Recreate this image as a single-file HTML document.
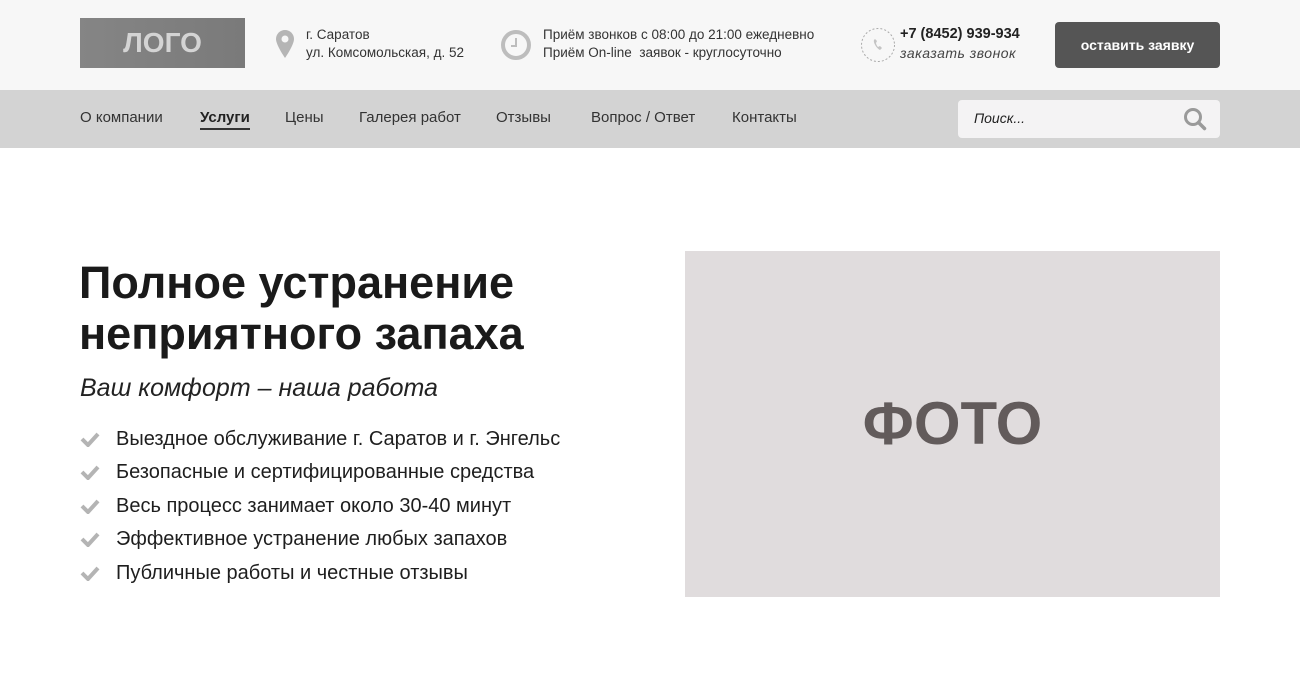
<!DOCTYPE html>
<html><head><meta charset="utf-8"><style>
*{margin:0;padding:0;box-sizing:border-box}
body{width:1300px;height:700px;background:#fff;font-family:"Liberation Sans",sans-serif;color:#222;position:relative;overflow:hidden}
.top{position:absolute;left:0;top:0;width:1300px;height:90px;background:#f7f7f7}
.nav{position:absolute;left:0;top:90px;width:1300px;height:58px;background:#d3d3d3}
.abs{position:absolute}
.logo{left:80px;top:18px;width:165px;height:50px;background:linear-gradient(90deg,#858585,#7a7a7a);color:#d4d4d4;font-weight:bold;font-size:28px;text-align:center;line-height:50px}
.sm{font-size:13.5px;line-height:18px;color:#333}
.nav a{position:absolute;top:19px;font-size:15px;color:#333;text-decoration:none}
.btn{left:1055px;top:22px;width:165px;height:46px;background:#555;border-radius:4px;color:#fff;font-weight:bold;font-size:14px;text-align:center;line-height:46px}
.search{left:958px;top:100px;width:262px;height:38px;background:#f4f3f4;border-radius:4px;font-style:italic;font-size:14px;line-height:36px;padding-left:16px;color:#222}
h1{position:absolute;left:79px;top:257px;font-size:45px;line-height:51px;font-weight:bold;color:#1a1a1a}
.sub{left:80px;top:374px;font-size:25px;font-style:italic;color:#222}
ul{position:absolute;left:80px;top:426px;list-style:none}
li{font-size:20px;height:33.4px;line-height:26px;padding-left:36px;position:relative;color:#1e1e1e}
li svg{position:absolute;left:0;top:5px}
.photo{left:685px;top:251px;width:535px;height:346px;background:#e0dcdd;color:#625b5b;font-weight:bold;font-size:60px;text-align:center;line-height:346px}
</style></head><body>
<div class="top"></div>
<div class="nav">
<a style="left:80px">О компании</a>
<a style="left:200px;font-weight:bold;color:#222;border-bottom:2px solid #333;padding-bottom:2px">Услуги</a>
<a style="left:285px">Цены</a>
<a style="left:359px">Галерея работ</a>
<a style="left:496px">Отзывы</a>
<a style="left:591px">Вопрос / Ответ</a>
<a style="left:732px">Контакты</a>
</div>
<div class="abs logo">ЛОГО</div>
<svg class="abs" style="left:275px;top:29px" width="20" height="30" viewBox="0 0 20 30"><path d="M10 1C5 1 1 5 1 10c0 6 9 19 9 19s9-13 9-19c0-5-4-9-9-9z" fill="#b5b5b5"/><circle cx="10" cy="10" r="3.5" fill="#f7f7f7"/></svg>
<div class="abs sm" style="left:306px;top:26px">г. Саратов<br>ул. Комсомольская, д. 52</div>
<svg class="abs" style="left:500px;top:29px" width="32" height="32" viewBox="0 0 32 32"><circle cx="16" cy="16" r="13" fill="none" stroke="#bdbdbd" stroke-width="4"/><path d="M16 9v8h-5" fill="none" stroke="#bdbdbd" stroke-width="2"/></svg>
<div class="abs sm" style="left:543px;top:26px">Приём звонков с 08:00 до 21:00 ежедневно<br>Приём On-line &nbsp;заявок - круглосуточно</div>
<svg class="abs" style="left:860px;top:27px" width="36" height="36" viewBox="0 0 36 36"><circle cx="18" cy="18" r="16.5" fill="none" stroke="#aaa" stroke-dasharray="2 2"/><path d="M14 13c-1 2 2 8 6 10l2-2-2-2-2 1c-1-1-2-3-2-4l1-2-2-2z" fill="#c4c4c4"/></svg>
<div class="abs" style="left:900px;top:26px;font-size:14.5px;font-weight:bold;color:#222">+7 (8452) 939-934</div>
<div class="abs" style="left:900px;top:45px;font-size:14px;font-style:italic;color:#444;letter-spacing:.5px">заказать звонок</div>
<div class="abs btn">оставить заявку</div>
<div class="abs search">Поиск...</div>
<svg class="abs" style="left:1183px;top:107px" width="24" height="24" viewBox="0 0 24 24"><circle cx="10" cy="10" r="7.5" fill="none" stroke="#9a9a9a" stroke-width="3"/><path d="M15.5 15.5l6 6" stroke="#9a9a9a" stroke-width="3.5" stroke-linecap="round"/></svg>
<h1>Полное устранение<br>неприятного запаха</h1>
<div class="abs sub">Ваш комфорт – наша работа</div>
<ul>
<li><svg width="20" height="16" viewBox="0 0 20 16"><path d="M2 8l6 6L18 3" fill="none" stroke="#b4b4b4" stroke-width="4"/></svg>Выездное обслуживание г. Саратов и г. Энгельс</li>
<li><svg width="20" height="16" viewBox="0 0 20 16"><path d="M2 8l6 6L18 3" fill="none" stroke="#b4b4b4" stroke-width="4"/></svg>Безопасные и сертифицированные средства</li>
<li><svg width="20" height="16" viewBox="0 0 20 16"><path d="M2 8l6 6L18 3" fill="none" stroke="#b4b4b4" stroke-width="4"/></svg>Весь процесс занимает около 30-40 минут</li>
<li><svg width="20" height="16" viewBox="0 0 20 16"><path d="M2 8l6 6L18 3" fill="none" stroke="#b4b4b4" stroke-width="4"/></svg>Эффективное устранение любых запахов</li>
<li><svg width="20" height="16" viewBox="0 0 20 16"><path d="M2 8l6 6L18 3" fill="none" stroke="#b4b4b4" stroke-width="4"/></svg>Публичные работы и честные отзывы</li>
</ul>
<div class="abs photo">ФОТО</div>
</body></html>
